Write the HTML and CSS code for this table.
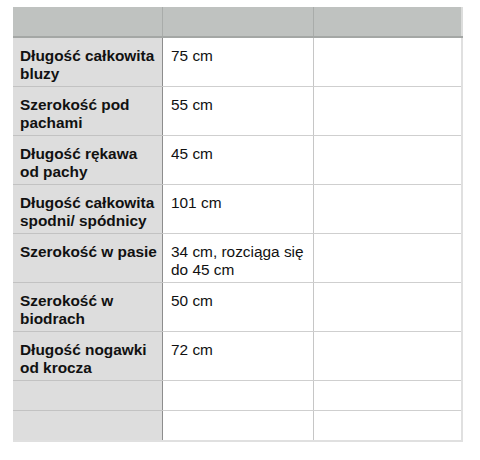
FILE: index.html
```html
<!DOCTYPE html>
<html lang="pl">
<head>
<meta charset="utf-8">
<link rel="stylesheet" href="styles.css">
</head>
<body>
<table class="sizes">
  <thead>
    <tr><th class="c1"></th><th class="c2"></th><th class="c3"></th></tr>
  </thead>
  <tbody>
    <tr><td class="c1">Długość całkowita bluzy</td><td class="c2">75 cm</td><td class="c3"></td></tr>
    <tr><td class="c1">Szerokość pod pachami</td><td class="c2">55 cm</td><td class="c3"></td></tr>
    <tr><td class="c1">Długość rękawa od pachy</td><td class="c2">45 cm</td><td class="c3"></td></tr>
    <tr><td class="c1">Długość całkowita spodni/ spódnicy</td><td class="c2">101 cm</td><td class="c3"></td></tr>
    <tr><td class="c1 nw">Szerokość w pasie</td><td class="c2">34 cm, rozciąga się do 45 cm</td><td class="c3"></td></tr>
    <tr><td class="c1">Szerokość w biodrach</td><td class="c2">50 cm</td><td class="c3"></td></tr>
    <tr><td class="c1">Długość nogawki od krocza</td><td class="c2">72 cm</td><td class="c3"></td></tr>
    <tr class="empty"><td class="c1"></td><td class="c2"></td><td class="c3"></td></tr>
    <tr class="empty last"><td class="c1"></td><td class="c2"></td><td class="c3"></td></tr>
  </tbody>
</table>
</body>
</html>
```

FILE: styles.css
```css
html, body {
  margin: 0;
  padding: 0;
  background: #ffffff;
}

body {
  padding: 7px 0 0 13px;
  font-family: "Liberation Sans", Arial, sans-serif;
  font-size: 15.4px;
  line-height: 18px;
  color: #111111;
}

.sizes {
  border-collapse: collapse;
  table-layout: fixed;
  width: 450px;
}

.sizes th {
  height: 29px;
  padding: 0;
  background: #bfc2c0;
  border-bottom: 2px solid #a4a7a5;
}

.sizes th.c2 {
  border-left: 1px solid #a9acaa;
}

.sizes th.c3 {
  border-left: 1px solid #a9acaa;
  border-right: 2px solid #dcdddc;
}

.c1 { width: 149px; }
.c2 { width: 150px; }

.sizes td {
  height: 49px;
  padding: 9px 7px 0 7px;
  vertical-align: top;
  box-sizing: border-box;
  border-bottom: 1px solid #cfcfcf;
}

.sizes td.c1 {
  background: #dddddd;
  font-weight: bold;
  border-bottom-color: #c2c2c2;
}

.sizes td.nw {
  white-space: nowrap;
  padding-right: 0;
}

.sizes td.c2 {
  padding-left: 8px;
  border-left: 1px solid #8d8d8d;
}

.sizes td.c3 {
  border-left: 1px solid #c6c6c6;
  border-right: 2px solid #e0e0e0;
}

.sizes tr.empty td {
  height: 30px;
  padding: 0;
}

.sizes tr.last td {
  height: 31px;
  border-bottom: 2px solid #e0e0e0;
}
```
